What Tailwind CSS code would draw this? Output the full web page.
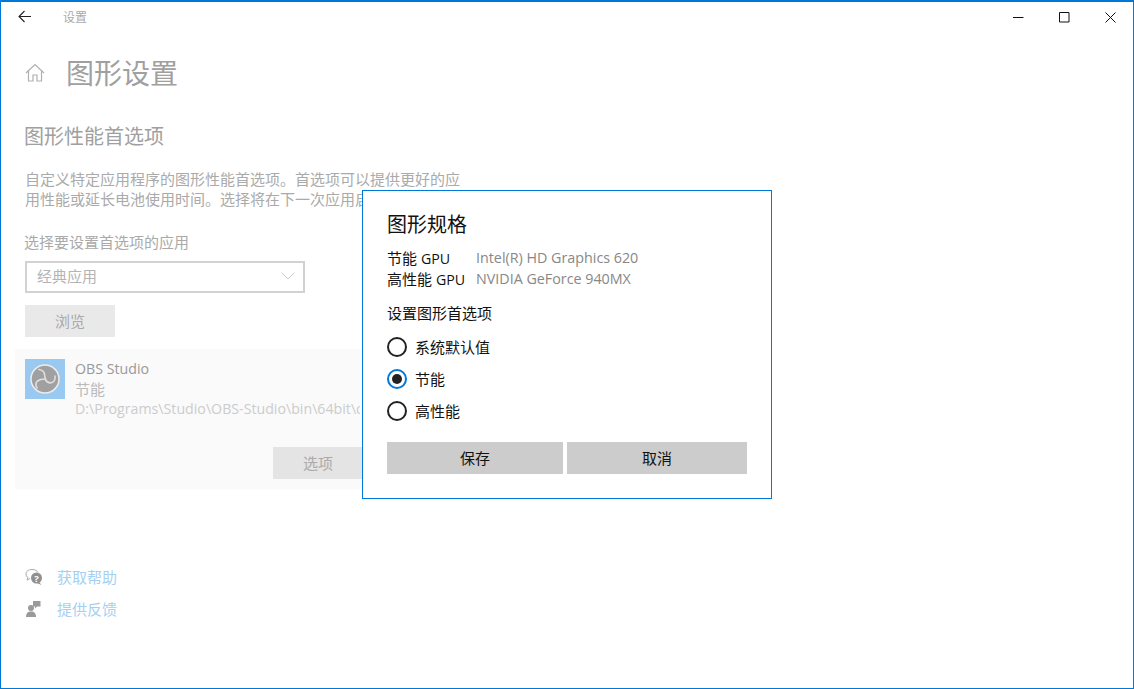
<!DOCTYPE html>
<html lang="zh-CN">
<head>
    <meta charset="UTF-8">
    <title>设置</title>
    <script src="https://cdn.jsdelivr.net/npm/@tailwindcss/browser@4"></script>
</head>
<body class="bg-white font-['Open_Sans','Noto_Sans_CJK_SC',sans-serif] overflow-hidden">

<div class="relative w-[1134px] h-[689px] overflow-hidden border border-t-2 border-[#0078d7] bg-white">

    <!-- Title bar -->
    <div class="flex items-center h-[30px]">
        <div class="w-[46px] flex justify-center">
            <svg width="16" height="16" viewBox="0 0 16 16" fill="none" stroke="#222" stroke-width="1.1"><path d="M3 7.500H15M8.500 2 3 7.500 8.500 13"/></svg>
        </div>
        <span class="ml-[16px] mt-[2px] text-[12px] leading-[32px] text-[#aaa]">设置</span>
        <div class="ml-auto flex items-center">
            <div class="w-[46px] flex justify-center"><svg width="11" height="11" viewBox="0 0 11 11" fill="none" stroke="#111"><path d="M0 5.500h10.500"/></svg></div>
            <div class="w-[46px] flex justify-center"><svg width="11" height="11" viewBox="0 0 11 11" fill="none" stroke="#111"><path d="M.5.5h9.500v9.500H.5z"/></svg></div>
            <div class="w-[46px] flex justify-center"><svg width="11" height="11" viewBox="0 0 11 11" fill="none" stroke="#111"><path d="M.5.5l10 10M10.500.5l-10 10"/></svg></div>
        </div>
    </div>

    <!-- Content -->
    <div class="pl-[24px]">
        <div class="flex items-center mt-[19px] h-[44px]">
            <svg width="20" height="20" viewBox="0 0 20 20" fill="none" stroke="#b0b0b0" stroke-width="1.2"><path d="M1 10 10 1.500 19 10M3.500 8v10h4.500v-6h4v6h4.500V8"/></svg>
            <h1 class="ml-[21px] text-[28px] leading-[44px] text-[#a0a0a0]">图形设置</h1>
        </div>
        <h2 class="mt-[28px] -ml-px text-[20px] leading-[28px] text-[#a0a0a0]">图形性能首选项</h2>
        <p class="mt-[18px] w-[440px] text-[15px] leading-[20px] text-[#aaa]">自定义特定应用程序的图形性能首选项。首选项可以提供更好的应用性能或延长电池使用时间。选择将在下一次应用启动时生效。</p>
        <div class="mt-[23px] -ml-px text-[15px] leading-[20px] text-[#aaa]">选择要设置首选项的应用</div>
        <div class="mt-[9px] w-[280px] h-[32px] border-2 border-[#d2d2d2] flex items-center justify-between pl-[10px] pr-[8px] pb-[2px] text-[15px] text-[#b4b4b4]">
            <span>经典应用</span>
            <svg width="14" height="8" viewBox="0 0 14 8" fill="none" stroke="#ccc"><path d="M.5.5 7 7 13.500.5"/></svg>
        </div>
        <div class="mt-[12px] w-[90px] h-[32px] bg-[#e9e9e9] flex items-center justify-center text-[15px] text-[#aaa]">浏览</div>

        <!-- App card -->
        <div class="mt-[12px] -ml-[10px] w-[360px] h-[140px] bg-[#fafafa] pt-[10px] pl-[10px] flex gap-[10px] relative">
            <div class="w-[40px] h-[40px] bg-[#99c9f0] flex items-center justify-center shrink-0">
                <svg width="30" height="30" viewBox="0 0 30 30">
                    <circle cx="15" cy="15" r="14" fill="#a0a0a0" stroke="#ececec" stroke-width="1.500"/>
                    <g fill="none" stroke="#dedede" stroke-width="1.600" stroke-linecap="round">
                        <path d="M9 5.500c3 .5 5 2 5.500 4.500.2 1.500 0 3 1 4.500"/>
                        <path d="M25 12c.5 3-.5 5.500-3 6.500-2.500 1-5 0-7-3.500"/>
                        <path d="M7 24c-1.500-2.500-1.500-5 .5-7 2-1.500 5-2 7.500-2"/>
                    </g>
                </svg>
            </div>
            <div class="text-[15px] leading-[20px] whitespace-nowrap w-[285px] overflow-hidden">
                <div class="text-[14.2px] text-[#999]">OBS Studio</div>
                <div class="text-[#bbb]">节能</div>
                <div class="text-[14.2px] text-[#ccc]">D:\Programs\Studio\OBS-Studio\bin\64bit\obs64.exe</div>
            </div>
            <div class="absolute left-[258px] top-[98px] w-[90px] h-[32px] bg-[#e4e4e4] flex items-center justify-center text-[15px] text-[#aaa]">选项</div>
        </div>

        <!-- Links -->
        <div class="mt-[78px] flex items-center h-[20px]">
            <svg width="20" height="20" viewBox="0 0 20 20">
                <path d="M7 2.500c-3.500 0-6 2-6 4.500 0 1.600.8 2.800 2 3.600L2 13l3-1.500" fill="none" stroke="#a8a8a8" stroke-width="1"/>
                <path d="M7 2.500c3 0 5 1 6 3" fill="none" stroke="#a8a8a8" stroke-width="1"/>
                <circle cx="11.500" cy="11" r="5.500" fill="#909090"/>
                <path d="M14 15l2.500 3-4.500-2z" fill="#909090"/>
                <text x="11.500" y="14.500" text-anchor="middle" font-size="9.500" font-weight="700" fill="#fff">?</text>
            </svg>
            <span class="ml-[12px] text-[15px] text-[#a6d0f2]">获取帮助</span>
        </div>
        <div class="mt-[12px] flex items-center h-[20px]">
            <svg width="20" height="20" viewBox="0 0 20 20" fill="#9a9a9a">
                <circle cx="6" cy="9" r="3"/>
                <path d="M1 18c0-3.500 1.500-5.500 5-5.500s5 2 5 5.500z"/>
                <path d="M8 2h7.500v5.500H12l-2 2V7.500H8z"/>
            </svg>
            <span class="ml-[12px] text-[15px] text-[#a6d0f2]">提供反馈</span>
        </div>
    </div>

    <!-- Dialog -->
    <div class="absolute left-[361px] top-[188px] w-[410px] h-[309px] bg-white border border-[#0078d7] pl-[24px] pr-[24px]">
        <div class="mt-[19px] text-[20px] leading-[30px] text-[#111]">图形规格</div>
        <div class="mt-[8px] text-[15px] leading-[20px] grid grid-cols-[89px_1fr]">
            <span class="text-[#111]">节能 <span class="text-[14.2px]">GPU</span></span><span class="text-[14.300px] text-[#888]">Intel(R) HD Graphics 620</span>
            <span class="text-[#111]">高性能 <span class="text-[14.2px]">GPU</span></span><span class="text-[14.300px] text-[#888]">NVIDIA GeForce 940MX</span>
        </div>
        <div class="mt-[13px] text-[15px] leading-[20px] text-[#111]">设置图形首选项</div>
        <div class="mt-[14px] flex flex-col gap-[12px] text-[15px] text-[#111]">
            <div class="flex items-center gap-[8px] h-[20px]">
                <span class="w-[20px] h-[20px] rounded-full border-2 border-[#222]"></span><span>系统默认值</span>
            </div>
            <div class="flex items-center gap-[8px] h-[20px]">
                <span class="w-[20px] h-[20px] rounded-full border-2 border-[#0078d7] flex items-center justify-center"><span class="w-[10px] h-[10px] rounded-full bg-[#222]"></span></span><span>节能</span>
            </div>
            <div class="flex items-center gap-[8px] h-[20px]">
                <span class="w-[20px] h-[20px] rounded-full border-2 border-[#222]"></span><span>高性能</span>
            </div>
        </div>
        <div class="mt-[21px] flex gap-[4px] text-[15px] text-[#111]">
            <div class="w-[176px] h-[32px] bg-[#cccccc] flex items-center justify-center">保存</div>
            <div class="w-[180px] h-[32px] bg-[#cccccc] flex items-center justify-center">取消</div>
        </div>
    </div>
</div>

</body>
</html>
